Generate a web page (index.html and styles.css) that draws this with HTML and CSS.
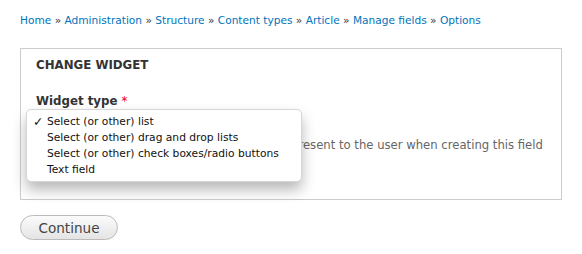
FILE: index.html
```html
<!DOCTYPE html>
<html>
<head>
<meta charset="utf-8">
<link rel="stylesheet" href="styles.css">
</head>
<body>
<div class="page">
  <nav class="breadcrumb">
    <a href="#">Home</a> » <a href="#">Administration</a> » <a href="#">Structure</a> » <a href="#">Content types</a> » <a href="#">Article</a> » <a href="#">Manage fields</a> » <a href="#">Options</a>
  </nav>
  <div class="fieldset">
    <div class="legend">CHANGE WIDGET</div>
    <div class="form-item">
      <div class="label">Widget type <span class="req">*</span></div>
      <div class="select-wrap">
        <div class="select"><span class="arrows">⬍</span></div>
        <div class="menu">
          <div class="opt"><span class="check">✓</span>Select (or other) list</div>
          <div class="opt">Select (or other) drag and drop lists</div>
          <div class="opt">Select (or other) check boxes/radio buttons</div>
          <div class="opt">Text field</div>
        </div>
      </div>
      <div class="desc">The type of form element you would like to present to the user when creating this field in the Article type.</div>
    </div>
  </div>
  <button class="btn">Continue</button>
</div>
</body>
</html>
```
FILE: styles.css
```css
html, body { margin: 0; padding: 0; background: #fff; }
body { font-family: "DejaVu Sans", sans-serif; color: #333; }
.page { padding: 13px 20px 0 20px; width: 542px; }
.breadcrumb { font-size: 10.6px; line-height: 15px; color: #333; height: 15px; }
.breadcrumb a { color: #0074bd; text-decoration: none; }
.fieldset { margin-top: 20px; border: 1px solid #ccc; padding: 0 15px; box-sizing: border-box; height: 152px; }
.legend { font-size: 11.8px; font-weight: bold; line-height: 14px; margin-top: 9px; color: #333; }
.form-item { margin-top: 22px; }
.label { font-size: 11.8px; font-weight: bold; line-height: 15px; color: #333; }
.req { color: #e00; font-weight: normal; }
.select-wrap { position: relative; height: 23px; }
.select { width: 246px; height: 22px; border-radius: 5px; background: #f4f6fb; border: 1px solid #e8ebf3; box-sizing: border-box; position: relative; }
.arrows { position: absolute; right: 8px; top: 3px; font-size: 10px; color: #bbb; }
.menu { position: absolute; left: -10px; top: 0; width: 276px; height: 73px; box-sizing: border-box; background: #fff; border: 1px solid #d6d6d6; border-radius: 5px; box-shadow: 0 8px 14px rgba(0,0,0,0.28); padding-top: 4px; z-index: 5; }
.opt { font-size: 10.7px; line-height: 16px; padding-left: 20px; position: relative; color: #111; }
.check { position: absolute; left: 6px; top: 0; font-size: 12.5px; font-weight: bold; }
.desc { font-size: 11.65px; line-height: 16px; color: #666; margin-top: 5px; width: 517px; }
.btn { margin-top: 15px; width: 98px; height: 25px; border: 1px solid #bbb; border-radius: 13px; background: linear-gradient(#fbfbfb, #e4e4e4); font-family: "DejaVu Sans", sans-serif; font-size: 13.6px; color: #444; padding: 0; display: block; }
```
